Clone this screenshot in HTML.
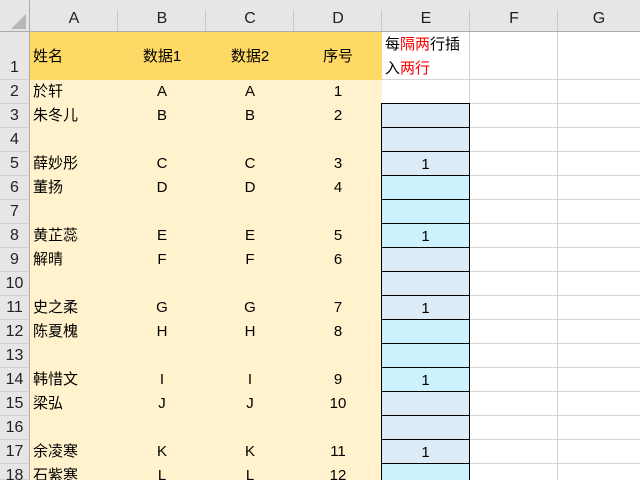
<!DOCTYPE html>
<html style="overflow:hidden;width:640px;height:480px"><head><meta charset="utf-8"><style>
body{margin:0;width:640px;height:480px;overflow:hidden;background:#fff;font-family:"Liberation Sans","Noto Sans CJK SC",sans-serif;font-size:15px;color:#000;position:relative}
.a{position:absolute;box-sizing:border-box}
.ch{top:0;height:32px;background:#e6e6e6;border-bottom:1px solid #ababab;text-align:center;line-height:38px;font-size:16px;color:#222}
.sep{top:10px;width:1px;height:21px;background:#c8c8c8}
.rh{left:0;width:30px;background:#e6e6e6;border-right:1px solid #ababab;border-bottom:1px solid #d0d0d0;text-align:center;font-size:16px;color:#222}
.c{height:24px;line-height:24px}
.g{border-right:1px solid #d4d4d4;border-bottom:1px solid #d4d4d4}
.y{background:#fff2cc}
.ctr{text-align:center}
.eb{background:#ddebf7;border:1px solid #000;text-align:center;line-height:25px}
.ec{background:#ccf2fe;border:1px solid #000;text-align:center;line-height:25px}
</style></head><body>
<div class="a" style="left:0;top:0;width:30px;height:32px;background:#e6e6e6;border-right:1px solid #ababab;border-bottom:1px solid #ababab"></div>
<svg class="a" style="left:10px;top:14px" width="16" height="16"><polygon points="16,0 16,15 1,15" fill="#b8b8b8"/></svg>
<div class="a ch" style="left:30px;width:88px">A</div>
<div class="a ch" style="left:118px;width:88px">B</div>
<div class="a ch" style="left:206px;width:88px">C</div>
<div class="a ch" style="left:294px;width:88px">D</div>
<div class="a ch" style="left:382px;width:88px">E</div>
<div class="a ch" style="left:470px;width:88px">F</div>
<div class="a ch" style="left:558px;width:82px">G</div>
<div class="a sep" style="left:117px"></div><div class="a sep" style="left:205px"></div><div class="a sep" style="left:293px"></div><div class="a sep" style="left:381px"></div><div class="a sep" style="left:469px"></div><div class="a sep" style="left:557px"></div>

<!-- row 1 -->
<div class="a rh" style="top:32px;height:48px;line-height:72px">1</div>
<div class="a" style="left:30px;top:32px;width:352px;height:48px;background:#ffd966"></div>
<div class="a" style="left:33px;top:45px">姓名</div>
<div class="a ctr" style="left:118px;top:45px;width:88px">数据1</div>
<div class="a ctr" style="left:206px;top:45px;width:88px">数据2</div>
<div class="a ctr" style="left:294px;top:45px;width:88px">序号</div>
<div class="a g" style="left:382px;top:32px;width:88px;height:48px"></div>
<div class="a" style="left:385px;top:33px;line-height:24px">每<span style="color:#f00">隔两</span>行插<br>入<span style="color:#f00">两行</span></div>
<div class="a g" style="left:470px;top:32px;width:88px;height:48px"></div>
<div class="a g" style="left:558px;top:32px;width:88px;height:48px"></div>

<div class="a y" style="left:30px;top:80px;width:352px;height:400px"></div>

<div class="a rh c" style="top:80px">2</div><div class="a c" style="left:33px;top:80px">於轩</div><div class="a c ctr" style="left:118px;top:80px;width:88px">A</div><div class="a c ctr" style="left:206px;top:80px;width:88px">A</div><div class="a c ctr" style="left:294px;top:80px;width:88px">1</div>
<div class="a rh c" style="top:104px">3</div><div class="a c" style="left:33px;top:104px">朱冬儿</div><div class="a c ctr" style="left:118px;top:104px;width:88px">B</div><div class="a c ctr" style="left:206px;top:104px;width:88px">B</div><div class="a c ctr" style="left:294px;top:104px;width:88px">2</div>
<div class="a rh c" style="top:128px">4</div>
<div class="a rh c" style="top:152px">5</div><div class="a c" style="left:33px;top:152px">薛妙彤</div><div class="a c ctr" style="left:118px;top:152px;width:88px">C</div><div class="a c ctr" style="left:206px;top:152px;width:88px">C</div><div class="a c ctr" style="left:294px;top:152px;width:88px">3</div>
<div class="a rh c" style="top:176px">6</div><div class="a c" style="left:33px;top:176px">董扬</div><div class="a c ctr" style="left:118px;top:176px;width:88px">D</div><div class="a c ctr" style="left:206px;top:176px;width:88px">D</div><div class="a c ctr" style="left:294px;top:176px;width:88px">4</div>
<div class="a rh c" style="top:200px">7</div>
<div class="a rh c" style="top:224px">8</div><div class="a c" style="left:33px;top:224px">黄芷蕊</div><div class="a c ctr" style="left:118px;top:224px;width:88px">E</div><div class="a c ctr" style="left:206px;top:224px;width:88px">E</div><div class="a c ctr" style="left:294px;top:224px;width:88px">5</div>
<div class="a rh c" style="top:248px">9</div><div class="a c" style="left:33px;top:248px">解晴</div><div class="a c ctr" style="left:118px;top:248px;width:88px">F</div><div class="a c ctr" style="left:206px;top:248px;width:88px">F</div><div class="a c ctr" style="left:294px;top:248px;width:88px">6</div>
<div class="a rh c" style="top:272px">10</div>
<div class="a rh c" style="top:296px">11</div><div class="a c" style="left:33px;top:296px">史之柔</div><div class="a c ctr" style="left:118px;top:296px;width:88px">G</div><div class="a c ctr" style="left:206px;top:296px;width:88px">G</div><div class="a c ctr" style="left:294px;top:296px;width:88px">7</div>
<div class="a rh c" style="top:320px">12</div><div class="a c" style="left:33px;top:320px">陈夏槐</div><div class="a c ctr" style="left:118px;top:320px;width:88px">H</div><div class="a c ctr" style="left:206px;top:320px;width:88px">H</div><div class="a c ctr" style="left:294px;top:320px;width:88px">8</div>
<div class="a rh c" style="top:344px">13</div>
<div class="a rh c" style="top:368px">14</div><div class="a c" style="left:33px;top:368px">韩惜文</div><div class="a c ctr" style="left:118px;top:368px;width:88px">I</div><div class="a c ctr" style="left:206px;top:368px;width:88px">I</div><div class="a c ctr" style="left:294px;top:368px;width:88px">9</div>
<div class="a rh c" style="top:392px">15</div><div class="a c" style="left:33px;top:392px">梁弘</div><div class="a c ctr" style="left:118px;top:392px;width:88px">J</div><div class="a c ctr" style="left:206px;top:392px;width:88px">J</div><div class="a c ctr" style="left:294px;top:392px;width:88px">10</div>
<div class="a rh c" style="top:416px">16</div>
<div class="a rh c" style="top:440px">17</div><div class="a c" style="left:33px;top:440px">余凌寒</div><div class="a c ctr" style="left:118px;top:440px;width:88px">K</div><div class="a c ctr" style="left:206px;top:440px;width:88px">K</div><div class="a c ctr" style="left:294px;top:440px;width:88px">11</div>
<div class="a rh c" style="top:464px;height:16px">18</div><div class="a c" style="left:33px;top:464px">石紫寒</div><div class="a c ctr" style="left:118px;top:464px;width:88px">L</div><div class="a c ctr" style="left:206px;top:464px;width:88px">L</div><div class="a c ctr" style="left:294px;top:464px;width:88px">12</div>

<div class="a" style="left:382px;top:80px;width:258px;height:400px;background:repeating-linear-gradient(to bottom,transparent 0,transparent 23px,#d4d4d4 23px,#d4d4d4 24px)"></div>
<div class="a" style="left:469px;top:80px;width:1px;height:400px;background:#d4d4d4"></div>
<div class="a" style="left:557px;top:80px;width:1px;height:400px;background:#d4d4d4"></div>

<div class="a eb" style="left:381px;top:103px;width:89px;height:25px"></div>
<div class="a eb" style="left:381px;top:127px;width:89px;height:25px"></div>
<div class="a eb" style="left:381px;top:151px;width:89px;height:25px">1</div>
<div class="a ec" style="left:381px;top:175px;width:89px;height:25px"></div>
<div class="a ec" style="left:381px;top:199px;width:89px;height:25px"></div>
<div class="a ec" style="left:381px;top:223px;width:89px;height:25px">1</div>
<div class="a eb" style="left:381px;top:247px;width:89px;height:25px"></div>
<div class="a eb" style="left:381px;top:271px;width:89px;height:25px"></div>
<div class="a eb" style="left:381px;top:295px;width:89px;height:25px">1</div>
<div class="a ec" style="left:381px;top:319px;width:89px;height:25px"></div>
<div class="a ec" style="left:381px;top:343px;width:89px;height:25px"></div>
<div class="a ec" style="left:381px;top:367px;width:89px;height:25px">1</div>
<div class="a eb" style="left:381px;top:391px;width:89px;height:25px"></div>
<div class="a eb" style="left:381px;top:415px;width:89px;height:25px"></div>
<div class="a eb" style="left:381px;top:439px;width:89px;height:25px">1</div>
<div class="a ec" style="left:381px;top:463px;width:89px;height:17px;border-bottom:none"></div>
</body></html>
